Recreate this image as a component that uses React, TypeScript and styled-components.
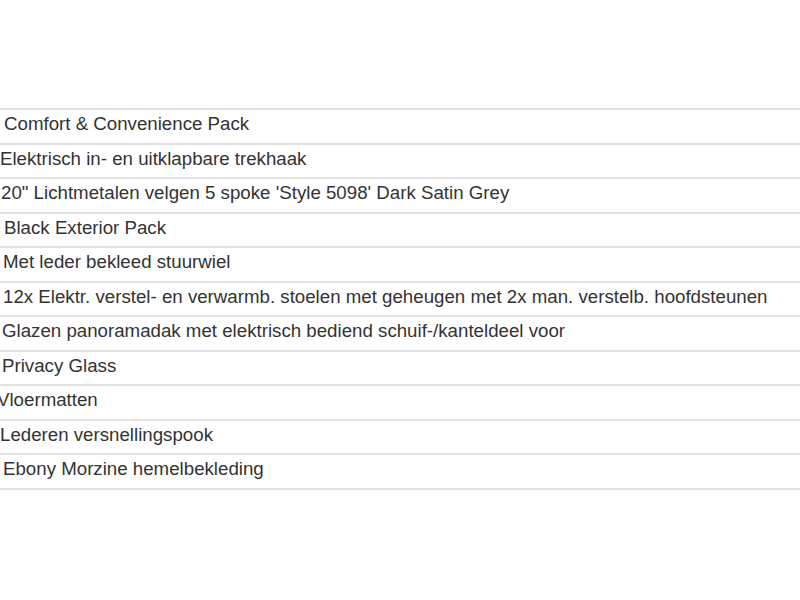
import React from 'react'
import styled, { createGlobalStyle } from 'styled-components'

const GlobalStyle = createGlobalStyle`
  html, body {
    margin: 0;
    padding: 0;
    background: #ffffff;
  }
  body {
    font-family: 'Liberation Sans', Arial, sans-serif;
    overflow: hidden;
  }
`

const Page = styled.div`
  width: 800px;
  height: 600px;
  padding-top: 108px;
  box-sizing: border-box;
  overflow: hidden;
`

const OptionList = styled.ul`
  list-style: none;
  margin: 0;
  padding: 0;
  border-top: 2px solid #e2e2e2;
`

interface RowProps {
  $indent: number
}

const OptionRow = styled.li<RowProps>`
  box-sizing: border-box;
  height: 34.55px;
  border-bottom: 2px solid #e2e2e2;
  line-height: 28px;
  text-indent: ${(props) => props.$indent}px;
  font-size: 18.7px;
  color: #333333;
  white-space: nowrap;
  overflow: hidden;
`

const options: { label: string; indent: number }[] = [
  { label: 'Comfort & Convenience Pack', indent: 4 },
  { label: 'Elektrisch in- en uitklapbare trekhaak', indent: 0 },
  { label: '20" Lichtmetalen velgen 5 spoke \'Style 5098\' Dark Satin Grey', indent: 1 },
  { label: 'Black Exterior Pack', indent: 4 },
  { label: 'Met leder bekleed stuurwiel', indent: 3 },
  { label: '12x Elektr. verstel- en verwarmb. stoelen met geheugen met 2x man. verstelb. hoofdsteunen', indent: 3 },
  { label: 'Glazen panoramadak met elektrisch bediend schuif-/kanteldeel voor', indent: 2 },
  { label: 'Privacy Glass', indent: 2 },
  { label: 'Vloermatten', indent: -3 },
  { label: 'Lederen versnellingspook', indent: 0 },
  { label: 'Ebony Morzine hemelbekleding', indent: 3 },
]

const App: React.FC = () => {
  return (
    <>
      <GlobalStyle />
      <Page>
        <OptionList>
          {options.map((o) => (
            <OptionRow key={o.label} $indent={o.indent}>
              {o.label}
            </OptionRow>
          ))}
        </OptionList>
      </Page>
    </>
  )
}

export default App
